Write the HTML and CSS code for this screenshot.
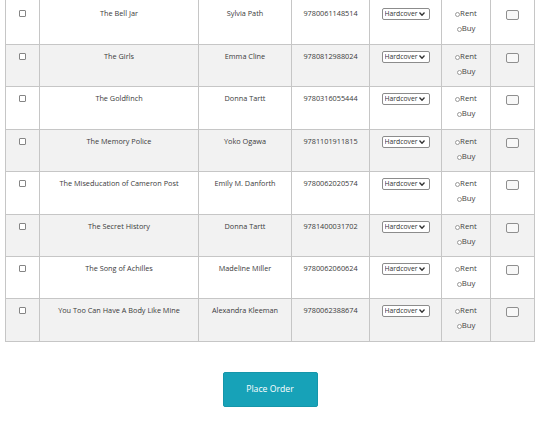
FILE: index.html
```html
<!DOCTYPE html>
<html>
<head>
<meta charset="utf-8">
<link rel="stylesheet" href="styles.css">
</head>
<body>
<div class="page">
  <table class="books">
    <colgroup>
      <col class="c-sel"><col class="c-title"><col class="c-author"><col class="c-isbn"><col class="c-format"><col class="c-mode"><col class="c-add">
    </colgroup>
    <tbody>
      <tr>
        <td><input type="checkbox" class="chk"></td>
        <td>The Bell Jar</td>
        <td>Sylvia Path</td>
        <td>9780061148514</td>
        <td><span class="fmt"><select><option>Hardcover</option></select><svg class="caret" viewBox="0 0 6 4" width="6" height="4"><path d="M0.5 0.5 L3 3.3 L5.5 0.5" fill="none" stroke="#333" stroke-width="1.3"/></svg></span></td>
        <td><label class="opt"><input type="radio" name="m1" class="rad">Rent</label><label class="opt"><input type="radio" name="m1" class="rad">Buy</label></td>
        <td><button class="box"></button></td>
      </tr>
      <tr>
        <td><input type="checkbox" class="chk"></td>
        <td>The Girls</td>
        <td>Emma Cline</td>
        <td>9780812988024</td>
        <td><span class="fmt"><select><option>Hardcover</option></select><svg class="caret" viewBox="0 0 6 4" width="6" height="4"><path d="M0.5 0.5 L3 3.3 L5.5 0.5" fill="none" stroke="#333" stroke-width="1.3"/></svg></span></td>
        <td><label class="opt"><input type="radio" name="m2" class="rad">Rent</label><label class="opt"><input type="radio" name="m2" class="rad">Buy</label></td>
        <td><button class="box"></button></td>
      </tr>
      <tr>
        <td><input type="checkbox" class="chk"></td>
        <td>The Goldfinch</td>
        <td>Donna Tartt</td>
        <td>9780316055444</td>
        <td><span class="fmt"><select><option>Hardcover</option></select><svg class="caret" viewBox="0 0 6 4" width="6" height="4"><path d="M0.5 0.5 L3 3.3 L5.5 0.5" fill="none" stroke="#333" stroke-width="1.3"/></svg></span></td>
        <td><label class="opt"><input type="radio" name="m3" class="rad">Rent</label><label class="opt"><input type="radio" name="m3" class="rad">Buy</label></td>
        <td><button class="box"></button></td>
      </tr>
      <tr>
        <td><input type="checkbox" class="chk"></td>
        <td>The Memory Police</td>
        <td>Yoko Ogawa</td>
        <td>9781101911815</td>
        <td><span class="fmt"><select><option>Hardcover</option></select><svg class="caret" viewBox="0 0 6 4" width="6" height="4"><path d="M0.5 0.5 L3 3.3 L5.5 0.5" fill="none" stroke="#333" stroke-width="1.3"/></svg></span></td>
        <td><label class="opt"><input type="radio" name="m4" class="rad">Rent</label><label class="opt"><input type="radio" name="m4" class="rad">Buy</label></td>
        <td><button class="box"></button></td>
      </tr>
      <tr>
        <td><input type="checkbox" class="chk"></td>
        <td>The Miseducation of Cameron Post</td>
        <td>Emily M. Danforth</td>
        <td>9780062020574</td>
        <td><span class="fmt"><select><option>Hardcover</option></select><svg class="caret" viewBox="0 0 6 4" width="6" height="4"><path d="M0.5 0.5 L3 3.3 L5.5 0.5" fill="none" stroke="#333" stroke-width="1.3"/></svg></span></td>
        <td><label class="opt"><input type="radio" name="m5" class="rad">Rent</label><label class="opt"><input type="radio" name="m5" class="rad">Buy</label></td>
        <td><button class="box"></button></td>
      </tr>
      <tr>
        <td><input type="checkbox" class="chk"></td>
        <td>The Secret History</td>
        <td>Donna Tartt</td>
        <td>9781400031702</td>
        <td><span class="fmt"><select><option>Hardcover</option></select><svg class="caret" viewBox="0 0 6 4" width="6" height="4"><path d="M0.5 0.5 L3 3.3 L5.5 0.5" fill="none" stroke="#333" stroke-width="1.3"/></svg></span></td>
        <td><label class="opt"><input type="radio" name="m6" class="rad">Rent</label><label class="opt"><input type="radio" name="m6" class="rad">Buy</label></td>
        <td><button class="box"></button></td>
      </tr>
      <tr>
        <td><input type="checkbox" class="chk"></td>
        <td>The Song of Achilles</td>
        <td>Madeline Miller</td>
        <td>9780062060624</td>
        <td><span class="fmt"><select><option>Hardcover</option></select><svg class="caret" viewBox="0 0 6 4" width="6" height="4"><path d="M0.5 0.5 L3 3.3 L5.5 0.5" fill="none" stroke="#333" stroke-width="1.3"/></svg></span></td>
        <td><label class="opt"><input type="radio" name="m7" class="rad">Rent</label><label class="opt"><input type="radio" name="m7" class="rad">Buy</label></td>
        <td><button class="box"></button></td>
      </tr>
      <tr>
        <td><input type="checkbox" class="chk"></td>
        <td>You Too Can Have A Body Like Mine</td>
        <td>Alexandra Kleeman</td>
        <td>9780062388674</td>
        <td><span class="fmt"><select><option>Hardcover</option></select><svg class="caret" viewBox="0 0 6 4" width="6" height="4"><path d="M0.5 0.5 L3 3.3 L5.5 0.5" fill="none" stroke="#333" stroke-width="1.3"/></svg></span></td>
        <td><label class="opt"><input type="radio" name="m8" class="rad">Rent</label><label class="opt"><input type="radio" name="m8" class="rad">Buy</label></td>
        <td><button class="box"></button></td>
      </tr>
    </tbody>
  </table>
  <div class="actions">
    <button class="order">Place Order</button>
  </div>
</div>
</body>
</html>
```

FILE: styles.css
```css
html, body {
  margin: 0;
  padding: 0;
  background: #ffffff;
}
body {
  font-family: "Open Sans", "Noto Sans", sans-serif;
  color: #3a3a3a;
}
.page {
  padding: 0 5px;
  margin-top: -1px;
}
.books {
  width: 530px;
  border-collapse: collapse;
  table-layout: fixed;
  font-size: 7.3px;
}
.c-sel { width: 34px; }
.c-title { width: 159px; }
.c-author { width: 93px; }
.c-isbn { width: 78px; }
.c-format { width: 72px; }
.c-mode { width: 49px; }
.c-add { width: 44px; }
.books td {
  border: 1px solid #c6c6c6;
  text-align: center;
  vertical-align: top;
  padding: 6px 2px 0 2px;
  height: 35.4px;
  line-height: 10px;
}
.books tr:first-child td {
  padding-top: 8px;
  height: 36px;
}
.books tr:nth-child(even) td {
  background: #f2f2f2;
}
.chk {
  appearance: none;
  -webkit-appearance: none;
  width: 7px;
  height: 7px;
  margin: 2px 0 0 0;
  border: 1px solid #858585;
  border-radius: 1px;
  background: #fff;
  vertical-align: top;
}
.fmt {
  position: relative;
  display: inline-block;
  width: 48px;
  height: 12px;
  vertical-align: top;
}
.fmt select {
  appearance: none;
  -webkit-appearance: none;
  display: block;
  box-sizing: border-box;
  width: 48px;
  height: 12px;
  margin: 0;
  padding: 0 0 0 2px;
  border: 1px solid #8c8c8c;
  border-radius: 2px;
  background: #fff;
  color: #333;
  font-family: "Open Sans", "Noto Sans", sans-serif;
  font-size: 6.8px;
  line-height: 10px;
}
.caret {
  position: absolute;
  right: 5px;
  top: 4px;
  pointer-events: none;
}
.opt {
  display: block;
  height: 15px;
  line-height: 10px;
  font-size: 7.8px;
  color: #444;
}
.rad {
  appearance: none;
  -webkit-appearance: none;
  width: 5px;
  height: 5px;
  margin: 0;
  border: 1px solid #9a9a9a;
  border-radius: 50%;
  background: #fff;
  vertical-align: -1px;
}
.box {
  appearance: none;
  -webkit-appearance: none;
  width: 13px;
  height: 10px;
  margin: 2px 0 0 0;
  padding: 0;
  border: 1px solid #8f8f8f;
  border-radius: 2px;
  background: #f8f8f8;
  vertical-align: top;
}
.actions {
  display: flex;
  justify-content: center;
  padding-top: 30px;
}
.order {
  width: 95px;
  height: 35px;
  background: #17a2b8;
  border: 1px solid #1596aa;
  border-radius: 2px;
  color: #ffffff;
  font-family: "Open Sans", "Noto Sans", sans-serif;
  font-size: 8.7px;
  padding: 0;
}
```
